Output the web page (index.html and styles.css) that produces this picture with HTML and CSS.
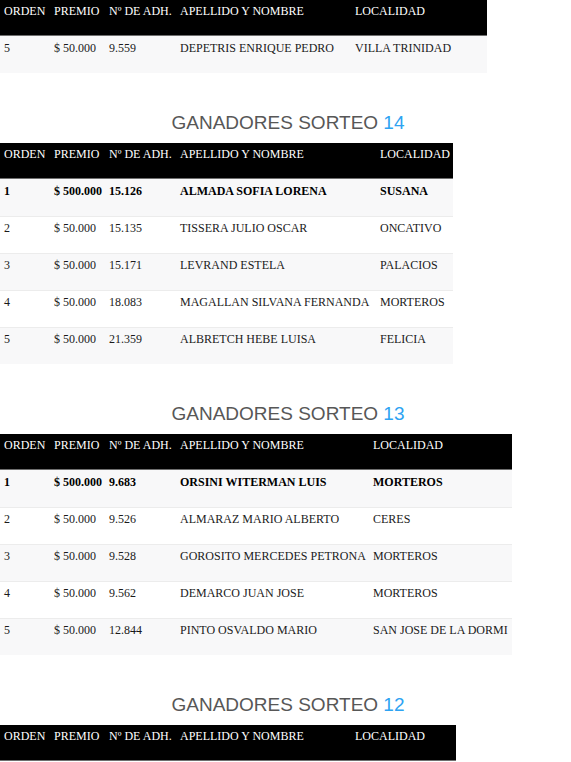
FILE: index.html
```html
<!DOCTYPE html>
<html lang="es">
<head>
<meta charset="utf-8">
<title>Ganadores</title>
<link rel="stylesheet" href="styles.css">
</head>
<body>
<main class="page">
  <table class="winners t15">
    <colgroup><col class="c1"><col class="c2"><col class="c3"><col class="c4"><col class="c5"></colgroup>
    <thead><tr><th>ORDEN</th><th>PREMIO</th><th>Nº DE ADH.</th><th>APELLIDO Y NOMBRE</th><th>LOCALIDAD</th></tr></thead>
    <tbody>
      <tr class="odd"><td>5</td><td>$ 50.000</td><td>9.559</td><td>DEPETRIS ENRIQUE PEDRO</td><td>VILLA TRINIDAD</td></tr>
    </tbody>
  </table>

  <h2 class="title">GANADORES SORTEO <span class="num">14</span></h2>
  <table class="winners t14">
    <colgroup><col class="c1"><col class="c2"><col class="c3"><col class="c4"><col class="c5"></colgroup>
    <thead><tr><th>ORDEN</th><th>PREMIO</th><th>Nº DE ADH.</th><th>APELLIDO Y NOMBRE</th><th>LOCALIDAD</th></tr></thead>
    <tbody>
      <tr class="odd first"><td>1</td><td>$ 500.000</td><td>15.126</td><td>ALMADA SOFIA LORENA</td><td>SUSANA</td></tr>
      <tr><td>2</td><td>$ 50.000</td><td>15.135</td><td>TISSERA JULIO OSCAR</td><td>ONCATIVO</td></tr>
      <tr class="odd"><td>3</td><td>$ 50.000</td><td>15.171</td><td>LEVRAND ESTELA</td><td>PALACIOS</td></tr>
      <tr><td>4</td><td>$ 50.000</td><td>18.083</td><td>MAGALLAN SILVANA FERNANDA</td><td>MORTEROS</td></tr>
      <tr class="odd"><td>5</td><td>$ 50.000</td><td>21.359</td><td>ALBRETCH HEBE LUISA</td><td>FELICIA</td></tr>
    </tbody>
  </table>

  <h2 class="title">GANADORES SORTEO <span class="num">13</span></h2>
  <table class="winners t13">
    <colgroup><col class="c1"><col class="c2"><col class="c3"><col class="c4"><col class="c5"></colgroup>
    <thead><tr><th>ORDEN</th><th>PREMIO</th><th>Nº DE ADH.</th><th>APELLIDO Y NOMBRE</th><th>LOCALIDAD</th></tr></thead>
    <tbody>
      <tr class="odd first"><td>1</td><td>$ 500.000</td><td>9.683</td><td>ORSINI WITERMAN LUIS</td><td>MORTEROS</td></tr>
      <tr><td>2</td><td>$ 50.000</td><td>9.526</td><td>ALMARAZ MARIO ALBERTO</td><td>CERES</td></tr>
      <tr class="odd"><td>3</td><td>$ 50.000</td><td>9.528</td><td>GOROSITO MERCEDES PETRONA</td><td>MORTEROS</td></tr>
      <tr><td>4</td><td>$ 50.000</td><td>9.562</td><td>DEMARCO JUAN JOSE</td><td>MORTEROS</td></tr>
      <tr class="odd"><td>5</td><td>$ 50.000</td><td>12.844</td><td>PINTO OSVALDO MARIO</td><td>SAN JOSE DE LA DORMI</td></tr>
    </tbody>
  </table>

  <h2 class="title">GANADORES SORTEO <span class="num">12</span></h2>
  <table class="winners t12">
    <colgroup><col class="c1"><col class="c2"><col class="c3"><col class="c4"><col class="c5"></colgroup>
    <thead><tr><th>ORDEN</th><th>PREMIO</th><th>Nº DE ADH.</th><th>APELLIDO Y NOMBRE</th><th>LOCALIDAD</th></tr></thead>
  </table>
</main>
</body>
</html>
```

FILE: styles.css
```css
html, body {
  margin: 0;
  padding: 0;
  background: #ffffff;
}

.page {
  display: flex;
  flex-direction: column;
  align-items: flex-start;
}

.title {
  align-self: stretch;
  margin: 39px 0 9px;
  padding-left: 5px;
  text-align: center;
  font-family: "Liberation Sans", Arial, sans-serif;
  font-weight: normal;
  font-size: 19px;
  line-height: 22px;
  color: #575757;
}

.title .num {
  color: #2ea3f2;
}

.winners {
  border-collapse: collapse;
  table-layout: fixed;
  font-family: "Liberation Serif", "Times New Roman", serif;
  font-size: 12px;
  line-height: 14px;
  color: #1a1a1a;
}

.winners th,
.winners td {
  padding: 4px 0 18px 4px;
  text-align: left;
  vertical-align: top;
  white-space: nowrap;
  overflow: visible;
}

.winners th {
  background: #000000;
  color: #ffffff;
  font-weight: normal;
  padding-bottom: 17px;
  border-bottom: 1px solid #6e6e6e;
}

.winners tbody tr {
  background: #ffffff;
}

.winners tbody tr.odd {
  background: #f8f8f9;
}

.winners tbody tr + tr td {
  border-top: 1px solid #ececec;
}

.winners tbody tr:first-child td {
  padding-top: 5px;
  padding-bottom: 18px;
}

.winners tr.first td {
  font-weight: bold;
  color: #000000;
}

.c1 { width: 50px; }
.c2 { width: 55px; }
.c3 { width: 71px; }

.t15 { width: 487px; }
.t15 .c4 { width: 175px; }
.t15 .c5 { width: 136px; }

.t14 { width: 453px; }
.t14 .c4 { width: 200px; }
.t14 .c5 { width: 77px; }

.t13 { width: 512px; }
.t13 .c4 { width: 193px; }
.t13 .c5 { width: 143px; }

.t12 { width: 456px; }
.t12 .c4 { width: 175px; }
.t12 .c5 { width: 105px; }
```
